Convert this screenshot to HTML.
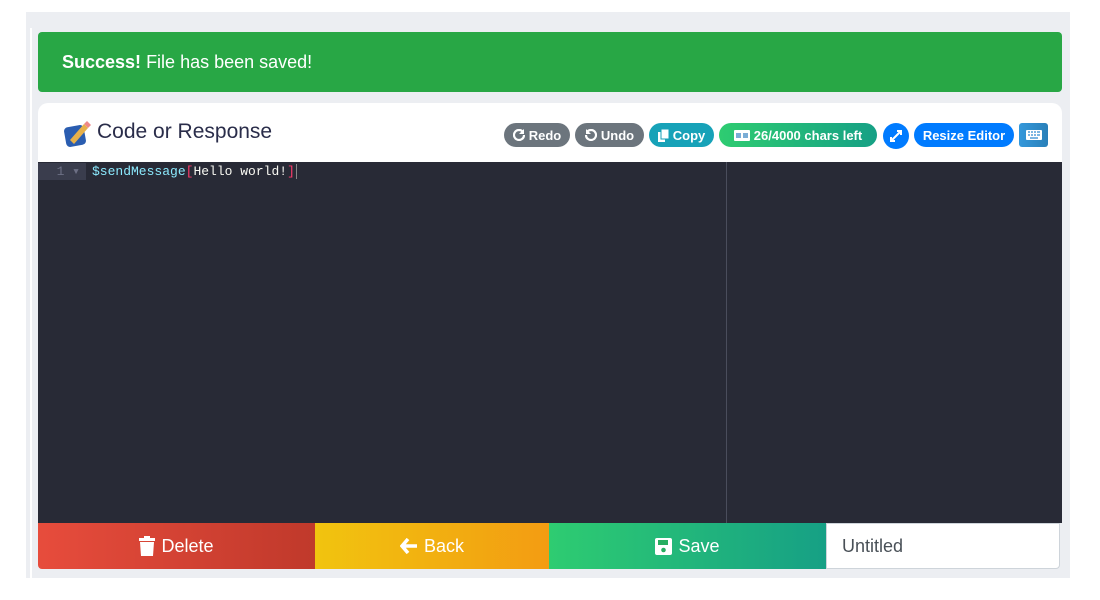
<!DOCTYPE html>
<html><head><style>
*{box-sizing:border-box;margin:0;padding:0}
body{width:1100px;height:600px;background:#fff;font-family:"Liberation Sans",sans-serif;position:relative;overflow:hidden}
.abs{position:absolute}
.badge{position:absolute;top:123px;height:24px;border-radius:12px;color:#fff;font-weight:bold;font-size:13px;display:flex;align-items:center;justify-content:center;gap:4px}
.btn{position:absolute;top:523px;height:46px;color:#fff;font-size:18px;display:flex;align-items:center;justify-content:center;gap:6px}
</style></head><body>
<div class="abs" style="left:26px;top:12px;width:1044px;height:566px;background:#eceef2"></div>
<div class="abs" style="left:30px;top:28px;width:2px;height:550px;background:#fff"></div>
<div class="abs" style="left:38px;top:32px;width:1024px;height:60px;background:#28a745;border-radius:4px;color:#fff;font-size:18px;line-height:60px;padding-left:24px"><b>Success!</b> File has been saved!</div>
<div class="abs" style="left:38px;top:103px;width:1024px;height:60px;background:#fff;border-radius:10px 10px 0 0"></div>
<svg class="abs" style="left:62px;top:118px" width="30" height="30" viewBox="0 0 30 30"><rect x="3" y="8" width="20" height="20" rx="4" fill="#2a5db0" transform="rotate(-10 13 18)"/><path d="M8 22 L22 6 L26 10 L12 26 Z" fill="#e6b04a"/><path d="M22 6 L25 3 L29 7 L26 10Z" fill="#e88"/></svg>
<div class="abs" style="left:97px;top:120px;font-size:21px;color:#2a2d4a">Code or Response</div>
<div class="badge" style="left:504px;width:66px;background:#6c757d"><svg width="12" height="12" viewBox="0 0 12 12"><path d="M10 3A5 5 0 1 0 11 6" stroke="#fff" stroke-width="2.2" fill="none"/><path d="M11 0V5H6Z" fill="#fff"/></svg>Redo</div>
<div class="badge" style="left:575px;width:69px;background:#6c757d"><svg width="12" height="12" viewBox="0 0 12 12"><path d="M2 3A5 5 0 1 1 1 6" stroke="#fff" stroke-width="2.2" fill="none"/><path d="M1 0V5H6Z" fill="#fff"/></svg>Undo</div>
<div class="badge" style="left:649px;width:65px;background:#17a2b8"><svg width="11" height="13" viewBox="0 0 11 13"><rect x="0" y="3" width="7" height="10" fill="#fff"/><rect x="3" y="0" width="8" height="10" fill="#fff" stroke="#17a2b8"/></svg>Copy</div>
<div class="badge" style="left:719px;width:158px;background:linear-gradient(90deg,#2ecc71,#16a085)"><svg width="16" height="11"><rect width="16" height="11" rx="1" fill="#fff"/><rect x="2" y="3" width="5" height="5" fill="#27b" opacity=".6"/><rect x="9" y="3" width="5" height="5" fill="#27b" opacity=".6"/></svg>26/4000 chars left</div>
<div class="badge" style="left:883px;width:26px;height:26px;border-radius:13px;background:#007bff"><svg width="12" height="12" viewBox="0 0 12 12"><path d="M1 11L11 1M7 1H11V5M1 7V11H5" stroke="#fff" stroke-width="2" fill="none"/></svg></div>
<div class="badge" style="left:914px;width:100px;background:#007bff">Resize Editor</div>
<div class="badge" style="left:1019px;width:29px;border-radius:3px;background:linear-gradient(90deg,#3498db,#2980b9)"><svg width="16" height="10"><rect width="16" height="10" rx="1" fill="#fff"/><path d="M2 2h2M5 2h2M8 2h2M11 2h3M2 5h2M5 5h2M8 5h2M11 5h3M4 8h8" stroke="#2f8ad0" stroke-width="1.3"/></svg></div>
<div class="abs" style="left:38px;top:162px;width:1024px;height:361px;background:#282a36"></div>
<div class="abs" style="left:38px;top:163px;width:48px;height:17px;background:#3a3d4d;color:#6d7085;font:13px 'Liberation Mono',monospace;line-height:17px;text-align:right;padding-right:6px">1 ▾</div>
<div class="abs" style="left:92px;top:163px;font:13px 'Liberation Mono',monospace;line-height:17px;color:#8be9fd">$sendMessage<span style="color:#ff3b6b">[</span><span style="color:#f8f8f2">Hello world!</span><span style="color:#ff3b6b">]</span><span style="display:inline-block;width:1px;height:15px;background:#888;vertical-align:middle;margin-left:1px"></span></div>
<div class="abs" style="left:726px;top:162px;width:1px;height:361px;background:#4a4d5c"></div>
<div class="btn" style="left:38px;width:277px;background:linear-gradient(90deg,#e74c3c,#c0392b);border-radius:0 0 0 4px"><svg width="16" height="20" viewBox="0 0 16 20"><rect x="0" y="2" width="16" height="3" fill="#fff"/><rect x="5" y="0" width="6" height="3" fill="#fff"/><path d="M1 6H15L14 20H2Z" fill="#fff"/></svg>Delete</div>
<div class="btn" style="left:315px;width:234px;background:linear-gradient(90deg,#f1c40f,#f39c12)"><svg width="18" height="16" viewBox="0 0 18 16"><path d="M8 1L2 8L8 15M2 8H17" stroke="#fff" stroke-width="3.5" fill="none"/></svg>Back</div>
<div class="btn" style="left:549px;width:277px;background:linear-gradient(90deg,#2ecc71,#16a085)"><svg width="17" height="17" viewBox="0 0 17 17"><rect width="17" height="17" rx="2" fill="#fff"/><rect x="3" y="2" width="10" height="5" fill="#27ae60"/><circle cx="8.5" cy="12" r="2.3" fill="#27ae60"/></svg>Save</div>
<div class="abs" style="left:826px;top:523px;width:234px;height:46px;background:#fff;border:1px solid #ced4da;border-radius:0 0 4px 0;font-size:18px;color:#495057;line-height:44px;padding-left:15px">Untitled</div>
</body></html>
